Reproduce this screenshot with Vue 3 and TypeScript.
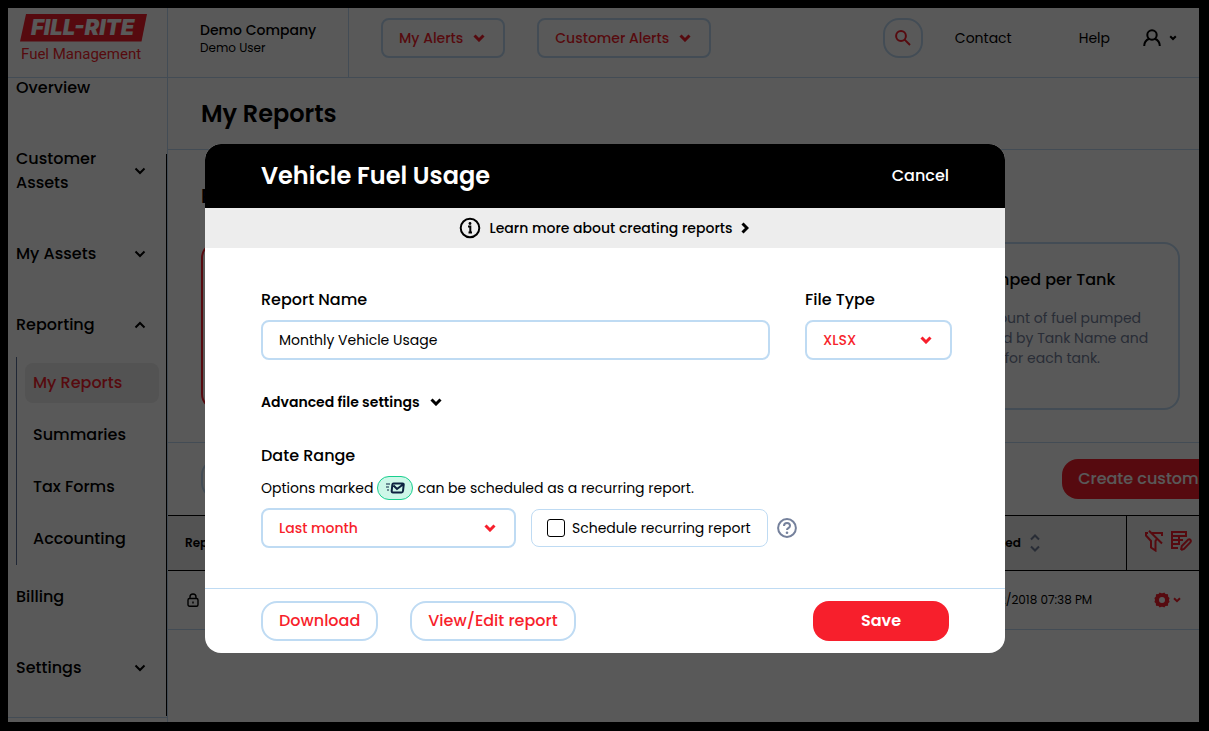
<script setup lang="ts">
import { ref } from 'vue'

interface NavItem {
  label: string
  icon?: 'down' | 'up'
  children?: string[]
}

const nav: NavItem[] = [
  { label: 'Overview' },
  { label: 'Customer Assets', icon: 'down' },
  { label: 'My Assets', icon: 'down' },
  { label: 'Reporting', icon: 'up', children: ['My Reports', 'Summaries', 'Tax Forms', 'Accounting'] },
  { label: 'Billing' },
  { label: 'Settings', icon: 'down' },
]

const activeChild = 'My Reports'
const alerts: string[] = ['My Alerts', 'Customer Alerts']

const reportName = ref('Monthly Vehicle Usage')
const fileType = ref('XLSX')
const dateRange = ref('Last month')
const recurring = ref(false)
</script>

<template>
  <div class="window">
    <div class="screen">
      <header class="topbar">
        <div class="brand">
          <svg class="logo" viewBox="0 0 128 50" role="img" aria-label="Fill-Rite Fuel Management">
            <path d="M6 0H127L121.500 27.500H0Z" fill="#f71f2c" />
            <text class="logo-name" x="11" y="21">FILL-RITE</text>
            <text class="logo-sub" x="1" y="45">Fuel Management</text>
          </svg>
        </div>
        <div class="company">
          <strong>Demo Company</strong>
          <span>Demo User</span>
        </div>
        <div class="alerts">
          <button v-for="a in alerts" :key="a" type="button" class="alert-btn">
            {{ a }}
            <svg class="chev" viewBox="0 0 12 8"><path d="M1.500 1.500L6 6L10.500 1.500" /></svg>
          </button>
        </div>
        <div class="tools">
          <button type="button" class="search" aria-label="Search">
            <svg width="16" height="16" viewBox="0 0 16 16"><circle cx="6" cy="6" r="4.900" /><path d="M9.600 9.600L15 15" /></svg>
          </button>
          <a href="#" class="contact">Contact</a>
          <a href="#" class="help">Help</a>
          <button type="button" class="user" aria-label="Account">
            <svg width="18" height="18" viewBox="0 0 18 18"><circle cx="9" cy="6" r="4.700" /><path d="M1.200 17C1.200 13 3.500 10.800 6.200 9.700M16.800 17C16.800 13 14.500 10.800 11.800 9.700" /></svg>
            <svg width="8" height="6" viewBox="0 0 8 6"><path d="M1.200 1.200L4 4L6.800 1.200" /></svg>
          </button>
        </div>
      </header>

      <div class="body">
        <nav class="sidebar">
          <ul class="menu">
            <li v-for="item in nav" :key="item.label">
              <a href="#" class="menu-link">
                <span>{{ item.label }}</span>
                <svg v-if="item.icon" class="chev" :class="item.icon" viewBox="0 0 12 8"><path d="M1.500 1.500L6 6L10.500 1.500" /></svg>
              </a>
              <ul v-if="item.children" class="submenu">
                <li v-for="c in item.children" :key="c">
                  <a href="#" :class="{ active: c === activeChild }">{{ c }}</a>
                </li>
              </ul>
            </li>
          </ul>
        </nav>

        <main class="main">
          <div class="title-row"><h1>My Reports</h1></div>
          <section class="templates">
            <h2>Reports</h2>
            <div class="cards">
              <article class="card selected"></article>
              <article class="card">
                <h3>Fuel Pumped per Tank</h3>
                <p>Total amount of fuel pumped<br />and sorted by Tank Name and<br />with total for each tank.</p>
              </article>
            </div>
          </section>
          <div class="toolbar">
            <input type="search" class="filter" aria-label="Filter reports" />
            <button type="button" class="create">Create custom report</button>
          </div>
          <table class="grid">
            <colgroup><col /><col class="col-date" /><col class="col-act" /></colgroup>
            <thead>
              <tr>
                <th>Report</th>
                <th>
                  <span class="sort">Created
                    <svg width="10" height="18" viewBox="0 0 10 18"><path d="M1 5.500L5 1.500L9 5.500M1 12.500L5 16.500L9 12.500" /></svg>
                  </span>
                </th>
                <th class="act">
                  <span class="act-icons">
                    <svg width="20" height="22" viewBox="0 0 20 22"><path d="M8 3H18V6M4 3H2V5.500L7 11V17.500L11.500 20.500V11L12.500 9.500M5 .8L18 13.500" /></svg>
                    <svg width="22" height="22" viewBox="0 0 22 22"><path d="M8 18H2V2H16V7M2 6H16M2 10H13M2 14H10M9 6V14M11 20L11.800 16L18 9.700Q19.500 8.800 20.500 10Q21.300 11.200 20.300 12.300L14 19L11 20" /></svg>
                  </span>
                </th>
              </tr>
            </thead>
            <tbody>
              <tr>
                <td>
                  <svg class="lock" width="12" height="14" viewBox="0 0 12 14"><rect x="1" y="5.500" width="10" height="7.700" rx="1.500" /><path d="M3 5.500V4Q3 1 6 1T9 4V5.500M6 8.500V10.500" /></svg>
                </td>
                <td>06/22/2018 07:38 PM</td>
                <td class="act">
                  <span class="gear">
                    <svg width="16" height="16" viewBox="0 0 16 16"><path class="solid" fill-rule="evenodd" d="M5.700 .5Q8 1.800 10.300 .5L11.500 2L14 2.200L14.200 4.700L15.600 6Q14.300 8 15.600 10L14.200 11.300L14 13.800L11.500 14L10.300 15.500Q8 14.200 5.700 15.500L4.500 14L2 13.800L1.800 11.300L.4 10Q1.700 8 .4 6L1.800 4.700L2 2.200L4.500 2ZM8 5A3 3 0 1 0 8 11A3 3 0 1 0 8 5Z" /></svg>
                    <svg width="8" height="6" viewBox="0 0 8 6"><path d="M1 1.200L4 4.200L7 1.200" /></svg>
                  </span>
                </td>
              </tr>
            </tbody>
          </table>
        </main>
      </div>
    </div>

    <div class="overlay">
      <form class="modal" role="dialog" aria-labelledby="dlg-title" @submit.prevent>
        <div class="modal-head">
          <h2 id="dlg-title">Vehicle Fuel Usage</h2>
          <button type="button">Cancel</button>
        </div>
        <a href="#" class="learn">
          <svg width="22" height="22" viewBox="0 0 22 22"><circle cx="11" cy="11" r="9.300" /><path d="M9 9.500H11.300V15.500M9.500 15.500H13" /><circle cx="11" cy="6.500" r="1.400" class="dot" /></svg>
          <span>Learn more about creating reports</span>
          <svg width="8" height="12" viewBox="0 0 8 12"><path d="M1.500 1.500L6 6L1.500 10.500" class="arrow" /></svg>
        </a>
        <div class="modal-body">
          <div class="fields">
            <div class="field">
              <label for="name">Report Name</label>
              <input id="name" v-model="reportName" type="text" />
            </div>
            <div class="field">
              <label for="type">File Type</label>
              <div class="select">
                <select id="type" v-model="fileType"><option>XLSX</option></select>
                <svg class="chev" viewBox="0 0 12 8"><path d="M1.500 1.500L6 6L10.500 1.500" /></svg>
              </div>
            </div>
          </div>
          <button type="button" class="advanced">
            Advanced file settings
            <svg class="chev" viewBox="0 0 12 8"><path d="M1.500 1.500L6 6L10.500 1.500" /></svg>
          </button>
          <label for="range" class="range-label">Date Range</label>
          <p class="hint">
            <span>Options marked</span>
            <span class="pill">
              <svg width="20" height="14" viewBox="0 0 20 14"><path d="M1 3H5M1 6H4M2 9H4" class="speed" /><path d="M8.500 2.500H17.500Q19 2.500 18.700 4L18 10Q17.800 11.500 16.500 11.500H8Q6.500 11.500 6.700 10L7.300 4Q7.500 2.500 8.500 2.500ZM8.500 4.500L12 8L18 3.500" /></svg>
            </span>
            <span>can be scheduled as a recurring report.</span>
          </p>
          <div class="range-row">
            <div class="select wide">
              <select id="range" v-model="dateRange"><option>Last month</option></select>
              <svg class="chev" viewBox="0 0 12 8"><path d="M1.500 1.500L6 6L10.500 1.500" /></svg>
            </div>
            <label class="recurring"><input v-model="recurring" type="checkbox" />Schedule recurring report</label>
            <button type="button" class="tip" aria-label="About recurring reports">
              <svg width="20" height="20" viewBox="0 0 20 20"><circle cx="10" cy="10" r="8.900" /><path d="M7 8Q7 5 10 5T13 7.800Q13 9.200 11.500 10Q10 10.700 10 12" /><circle cx="10" cy="14.800" r="1.300" class="dot" /></svg>
            </button>
          </div>
        </div>
        <div class="modal-foot">
          <button type="button" class="outline">Download</button>
          <button type="button" class="outline">View/Edit report</button>
          <button type="submit" class="save">Save</button>
        </div>
      </form>
    </div>
  </div>
</template>

<style>
body {
  margin: 0;
  background: #000;
}
</style>

<style scoped>
.window {
  --red: #f71f2c;
  --line: #bfdbf3;
  --slate: #75819c;
  box-sizing: border-box;
  height: 100vh;
  padding: 8px 10px 9px 8px;
  background: #000;
  color: #000;
  font: 400 14px/20px Poppins, Inter, "Liberation Sans", sans-serif;
}
.window *, .window *::before { box-sizing: border-box; }
button, input, select { font: inherit; color: inherit; margin: 0; }
button { background: none; border: 0; padding: 0; cursor: pointer; }
a { color: inherit; text-decoration: none; }
h1, h2, h3, p, ul { margin: 0; padding: 0; list-style: none; }
svg { flex: none; display: block; fill: none; stroke: currentColor; stroke-width: 2; }
.chev { width: 12px; height: 8px; stroke-width: 2; }
.chev.up { transform: rotate(180deg); }

.screen {
  height: 100%;
  display: flex;
  flex-direction: column;
  overflow: hidden;
  background: #fff;
}
.topbar {
  display: flex;
  flex: none;
  height: 70px;
  border-bottom: 1px solid var(--line);
}
.brand {
  width: 160px;
  padding: 6px 0 0 12px;
  border-right: 1px solid var(--line);
}
.logo { width: 128px; height: 50px; stroke: none; overflow: visible; }
.logo-name { font: italic 900 22px Inter, sans-serif; fill: #fff; }
.logo-sub { font: 400 15px Roboto, sans-serif; fill: var(--red); }
.company {
  width: 181px;
  padding: 12px 0 0 32px;
  border-right: 1px solid var(--line);
  display: flex;
  flex-direction: column;
}
.company strong { font-weight: 500; }
.company span { font-size: 12px; line-height: 16px; }
.alerts { display: flex; gap: 32px; padding: 10px 0 0 32px; }
.alert-btn {
  height: 40px;
  padding: 0 18px 0 16px;
  display: flex;
  align-items: center;
  gap: 10px;
  border: 2px solid var(--line);
  border-radius: 8px;
  color: var(--red);
  font-weight: 500;
}
.tools {
  margin-left: auto;
  display: flex;
  align-items: center;
  height: 60px;
  padding-right: 22px;
}
.search {
  width: 40px;
  height: 40px;
  display: grid;
  place-items: center;
  border: 2px solid var(--line);
  border-radius: 16px;
  color: var(--red);
  margin-right: 32px;
}
.contact { margin-right: 67px; }
.help { margin-right: 33px; }
.user { display: flex; align-items: center; gap: 8px; }

.body { display: flex; flex: 1; min-height: 0; }
.sidebar {
  position: relative;
  width: 160px;
  flex: none;
  overflow: hidden;
  border-right: 1px solid var(--line);
}
/* the menu is scrolled a little way down */
.menu {
  margin-top: -26px;
  padding: 0 0 14px 8px;
  border-bottom: 1px solid var(--line);
}
.menu-link {
  display: flex;
  align-items: center;
  justify-content: space-between;
  padding: 24px 21px 23px 0;
  font-size: 16px;
  font-weight: 500;
  line-height: 24px;
}
.menu-link span { max-width: 100px; }
.submenu {
  margin: -3px 0 -4px;
  padding: 6px 8px 6px 8px;
  border-left: 1px solid #5d6f97;
  display: flex;
  flex-direction: column;
  gap: 12px;
}
.submenu a {
  display: block;
  padding: 0 8px;
  border-radius: 8px;
  font-size: 16px;
  font-weight: 500;
  line-height: 40px;
}
.submenu a.active { background: #ededed; color: var(--red); }
.sidebar::before {
  content: "";
  position: absolute;
  right: 0;
  top: 76px;
  bottom: 6px;
  width: 1px;
  background: #000;
}

.main { flex: 1; min-width: 0; overflow: hidden; }
.title-row {
  height: 72px;
  padding: 0 33px;
  display: flex;
  align-items: center;
  border-bottom: 1px solid var(--line);
}
h1 { font-size: 24px; font-weight: 600; line-height: 32px; }
.templates {
  padding: 32px 19px 32px 33px;
  border-bottom: 1px solid var(--line);
}
.templates h2 { font-size: 20px; font-weight: 600; line-height: 28px; margin-bottom: 32px; }
.cards { display: flex; justify-content: space-between; gap: 24px; }
.card {
  height: 168px;
  width: 310px;
  padding: 24px 24px 24px 64px;
  border: 2px solid var(--line);
  border-radius: 16px;
  white-space: nowrap;
}
.card.selected { border-color: var(--red); }
.card h3 { font-size: 16px; font-weight: 500; line-height: 24px; margin-bottom: 16px; }
.card p { color: var(--slate); }
.toolbar {
  display: flex;
  justify-content: space-between;
  padding: 16px 0 16px 33px;
  margin-right: -69px;
}
.filter {
  width: 300px;
  height: 40px;
  border: 2px solid var(--line);
  border-radius: 16px;
  background: #fff;
}
.create {
  height: 40px;
  padding: 0 16px;
  border-radius: 16px;
  background: var(--red);
  color: #fff;
  font-size: 16px;
  font-weight: 500;
  white-space: nowrap;
}
.grid {
  width: 100%;
  table-layout: fixed;
  border-collapse: collapse;
  font-size: 12px;
}
.col-date { width: 172px; }
.col-act { width: 73px; }
.grid th {
  height: 55px;
  padding: 0 17px;
  background: #ededed;
  border-top: 1px solid #000;
  border-bottom: 1px solid #000;
  font-weight: 600;
  text-align: left;
}
.grid td { height: 59px; padding: 0 17px; border-bottom: 1px solid var(--line); white-space: nowrap; }
.grid th.act { border-left: 1px solid #000; }
.grid .act { color: var(--red); }
.grid th.act { padding: 0; }
.grid td.act { padding: 0 0 0 28px; }
.sort { display: flex; align-items: center; gap: 9px; }
.sort svg { color: var(--slate); stroke-width: 2; }
.act-icons { display: flex; gap: 6px; padding: 0 0 4px 17px; }
.gear { display: flex; align-items: center; gap: 3px; }
.gear .solid { fill: currentColor; stroke: none; }
.lock { margin-left: 2px; }
.lock rect, .lock path { stroke-width: 1.4; }

.overlay {
  position: fixed;
  inset: 0;
  display: flex;
  justify-content: center;
  align-items: flex-start;
  padding: 144px 0 0 1px;
  background: rgba(0, 0, 0, 0.65);
}
.modal {
  width: 800px;
  max-width: 100%;
  overflow: hidden;
  border-radius: 16px;
  background: #fff;
}
.modal-head {
  height: 64px;
  padding: 0 56px;
  display: flex;
  align-items: center;
  justify-content: space-between;
  background: #000;
  color: #fff;
}
.modal-head h2 { font-size: 24px; font-weight: 600; line-height: 32px; }
.modal-head button { font-size: 16px; font-weight: 500; }
.learn {
  height: 40px;
  padding-right: 2px;
  display: flex;
  align-items: center;
  justify-content: center;
  gap: 9px;
  background: #ededed;
  font-weight: 500;
}
.dot { fill: currentColor; stroke: none; }
.arrow { stroke-width: 3; }
.modal-body { padding: 40px 53px 40px 56px; }
.fields { display: grid; grid-template-columns: 1fr 147px; gap: 35px; }
.field { display: flex; flex-direction: column; gap: 8px; }
.field label, .range-label { display: block; font-size: 16px; font-weight: 500; line-height: 24px; }
.field input {
  height: 40px;
  width: 100%;
  padding: 0 16px;
  border: 2px solid var(--line);
  border-radius: 8px;
  background: #fff;
}
.select { position: relative; color: var(--red); }
.select select {
  appearance: none;
  width: 100%;
  height: 40px;
  padding: 0 16px;
  border: 2px solid var(--line);
  border-radius: 8px;
  background: #fff;
  font-weight: 500;
}
.select .chev { position: absolute; right: 20px; top: 16px; pointer-events: none; stroke-width: 3; }
.alert-btn .chev, .advanced .chev { stroke-width: 3; }
.advanced {
  display: flex;
  align-items: center;
  gap: 10px;
  margin: 32px 0;
  font-weight: 600;
  line-height: 20px;
}
.hint { display: flex; align-items: center; gap: 4px; margin: 8px 0; height: 24px; }
.pill {
  width: 36px;
  height: 24px;
  display: grid;
  place-items: center;
  border: 1px solid #18cf8e;
  border-radius: 12px;
  background: #cdf7e8;
  color: #0d2240;
}
.speed { stroke-width: 1; }
.range-row { display: flex; align-items: center; }
.wide { width: 255px; }
.recurring {
  height: 38px;
  width: 237px;
  margin-left: 15px;
  padding-left: 15px;
  display: flex;
  align-items: center;
  gap: 7px;
  border: 1px solid var(--line);
  border-radius: 8px;
  white-space: nowrap;
}
.recurring input {
  appearance: none;
  width: 18px;
  height: 18px;
  border: 1px solid #000;
  border-radius: 3px;
  background: #fff;
}
.tip { margin-left: 9px; color: var(--slate); }
.modal-foot {
  display: flex;
  gap: 32px;
  padding: 12px 56px;
  border-top: 1px solid var(--line);
}
.modal-foot button {
  height: 40px;
  padding: 0 16px;
  border-radius: 16px;
  font-size: 16px;
  font-weight: 500;
}
.outline { border: 2px solid var(--line); color: var(--red); }
.modal-foot .save {
  width: 136px;
  margin-left: auto;
  background: var(--red);
  color: #fff;
  font-weight: 600;
}
</style>
